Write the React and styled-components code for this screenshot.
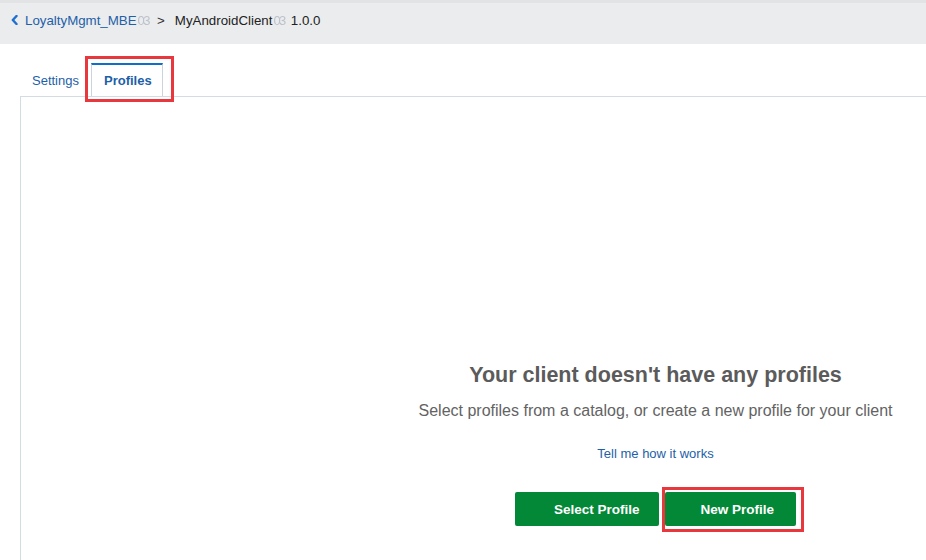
import styled, { createGlobalStyle } from "styled-components";

const GlobalStyle = createGlobalStyle`
  html, body {
    margin: 0;
    padding: 0;
    background: #ffffff;
    overflow: hidden;
  }
  body {
    font-family: "Liberation Sans", Arial, sans-serif;
  }
`;

const Page = styled.div`
  width: 926px;
  height: 560px;
  overflow: hidden;
`;

const Header = styled.div`
  height: 44px;
  box-sizing: border-box;
  background: linear-gradient(#e2e3e5 0, #e2e3e5 3px, #ebecee 3px);
  display: flex;
  align-items: center;
  padding: 0 0 4px 11px;
  font-size: 13.3px;
`;

const Crumb = styled.a`
  display: flex;
  align-items: center;
  color: #1d5fa8;
  text-decoration: none;
`;

const Chevron = styled.svg`
  width: 7px;
  height: 10px;
  margin-right: 7px;
`;

/* characters blurred out in the source screenshot */
const Masked = styled.span`
  color: #bcc2cb;
  filter: blur(0.7px);
  font-size: 13px;
  letter-spacing: -1.5px;
  margin-left: 1px;
`;

const Separator = styled.span`
  color: #333;
  margin: 0 10px 0 8px;
`;

const Current = styled.span`
  color: #222;
`;

const Version = styled.span`
  color: #222;
  margin-left: 6px;
`;

const TabRow = styled.div`
  display: flex;
  margin: 19px 0 0 20px;
`;

const Tab = styled.div`
  height: 33px;
  box-sizing: border-box;
  padding: ${(p) => (p.$active ? "0 10px 0 12px" : "0 11px")};
  display: flex;
  align-items: center;
  font-size: 13px;
  color: #1d5fa8;
  font-weight: ${(p) => (p.$active ? "bold" : "normal")};
  background: #fff;
  border-top: 2px solid ${(p) => (p.$active ? "#0d6fc8" : "transparent")};
  border-left: 1px solid ${(p) => (p.$active ? "#ccd3da" : "transparent")};
  border-right: 1px solid ${(p) => (p.$active ? "#ccd3da" : "transparent")};
`;

const Marked = styled.div`
  position: relative;
  display: flex;

  &::after {
    content: "";
    position: absolute;
    top: ${(p) => p.$t}px;
    left: ${(p) => p.$l}px;
    right: ${(p) => p.$r}px;
    bottom: ${(p) => p.$b}px;
    border: 3px solid #e8383d;
    pointer-events: none;
  }
`;

const Panel = styled.div`
  margin-left: 20px;
  width: 1270px;
  height: 470px;
  box-sizing: border-box;
  border-top: 1px solid #d3dbe3;
  border-left: 1px solid #d3dbe3;
  padding-top: 266px;
  display: flex;
  flex-direction: column;
  align-items: center;
`;

const Title = styled.h2`
  margin: 0;
  font-size: 21.5px;
  line-height: 24px;
  font-weight: bold;
  color: #5b5b5b;
`;

const Subtitle = styled.p`
  margin: 14px 0 0;
  font-size: 16px;
  line-height: 20px;
  color: #636363;
`;

const HelpLink = styled.a`
  margin-top: 25px;
  font-size: 13px;
  line-height: 16px;
  color: #1d5fa8;
  text-decoration: none;
`;

const Actions = styled.div`
  display: flex;
  gap: 6px;
  margin-top: 30px;
`;

const Button = styled.button`
  height: 34px;
  padding: ${(p) => p.$pad};
  border: none;
  border-radius: 2px;
  background: #028837;
  color: #fff;
  font-family: "Liberation Sans", Arial, sans-serif;
  font-size: 13.5px;
  font-weight: bold;
  cursor: pointer;
`;

export default function App() {
  return (
    <Page>
      <GlobalStyle />
      <Header>
        <Crumb href="#">
          <Chevron viewBox="0 0 7 10">
            <polyline
              points="5.5,1 1.8,5 5.5,9"
              fill="none"
              stroke="#1d6fd0"
              strokeWidth="2.4"
              strokeLinecap="round"
              strokeLinejoin="round"
            />
          </Chevron>
          LoyaltyMgmt_MBE<Masked>03</Masked>
        </Crumb>
        <Separator>&gt;</Separator>
        <Current>
          MyAndroidClient<Masked>03</Masked>
        </Current>
        <Version>1.0.0</Version>
      </Header>

      <TabRow>
        <Tab>Settings</Tab>
        <Marked $t={-7} $l={-6} $r={-11} $b={-6}>
          <Tab $active>Profiles</Tab>
        </Marked>
      </TabRow>

      <Panel>
        <Title>Your client doesn't have any profiles</Title>
        <Subtitle>
          Select profiles from a catalog, or create a new profile for your client
        </Subtitle>
        <HelpLink href="#">Tell me how it works</HelpLink>
        <Actions>
          <Button $pad="0 19px 0 39px">Select Profile</Button>
          <Marked $t={-5} $l={-3} $r={-8} $b={-6}>
            <Button $pad="0 22px 0 36px">New Profile</Button>
          </Marked>
        </Actions>
      </Panel>
    </Page>
  );
}
